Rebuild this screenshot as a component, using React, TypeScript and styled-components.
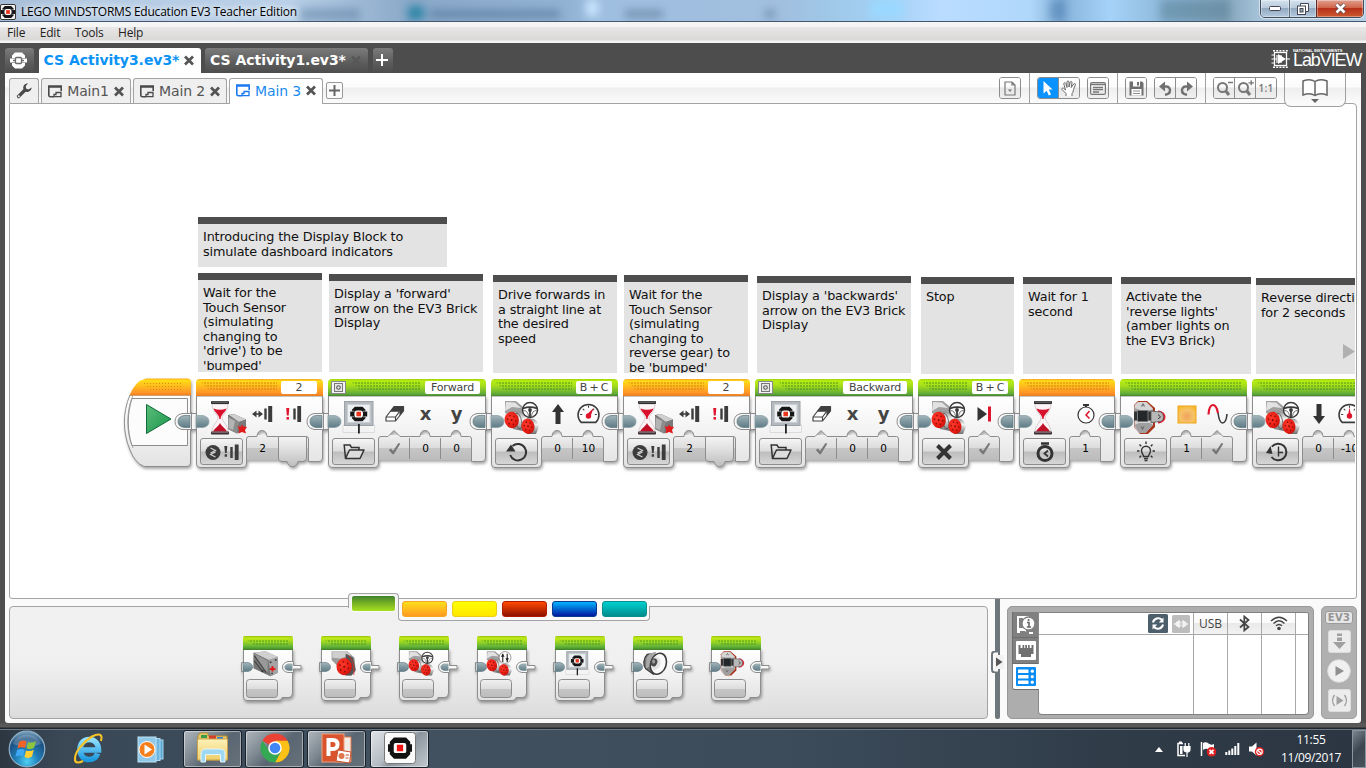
import React from "react";
import styled, { createGlobalStyle, css } from "styled-components";

const ui = `"Open Sans", "Noto Sans", sans-serif`;
const verdana = `"DejaVu Sans", sans-serif`;

const Global = createGlobalStyle`
  * { box-sizing: border-box; }
  body { margin: 0; background: #4d4d4d; overflow: hidden; }
  svg { display: block; flex: none; }
`;

/* ---------- window frame ---------- */

const Screen = styled.div`
  width: 1366px;
  height: 768px;
  display: flex;
  flex-direction: column;
  overflow: hidden;
  font-family: ${verdana};
  color: #111;
`;

const TitleBar = styled.div`
  position: relative;
  height: 22px;
  flex: none;
  display: flex;
  align-items: center;
  overflow: hidden;
  border-bottom: 1px solid #46566c;
  background: linear-gradient(90deg, #a5bcd6 0, #b4cbe4 90px, #b9d0e8 290px, #8aa8c8 410px, #92b3d4 570px, #9fbfe0 600px, #a1bfdf 780px, #9fc6e6 820px, #a3d0f3 880px, #b9dcff 940px, #b0d8fa 1030px, #86b2da 1060px, #a5d2f8 1110px, #8bb6d8 1170px, #84a6bd 1225px, #a8c4da 1262px, #b5cfe6 100%);
`;
const Haze = styled.svg`
  position: absolute;
  inset: 0;
  filter: blur(4px);
`;
const TitleText = styled.div`
  position: relative;
  margin-left: 5px;
  font: 12px/20px ${ui};
  letter-spacing: -0.22px;
  color: #000;
  white-space: nowrap;
  padding-top: 2px;
  text-shadow: 0 0 6px #fff, 0 0 8px #fff;
`;
const AppIcon = styled.svg`
  position: relative;
  margin-top: 2px;
`;
const WindowButtons = styled.div`
  position: relative;
  display: flex;
  align-self: flex-start;
  margin: -1px 2px 0 auto;
  height: 19px;
  border: 1px solid #3f4d5c;
  border-radius: 0 0 5px 5px;
  overflow: hidden;
  box-shadow: 0 0 0 1px rgba(255, 255, 255, 0.5);
`;
const WindowButton = styled.div<{ $w: number; $close?: boolean }>`
  width: ${(p) => p.$w}px;
  display: flex;
  align-items: center;
  justify-content: center;
  border-left: ${(p) => (p.$close ? "1px solid #5a2a22" : "1px solid #5c6c7c")};
  background: ${(p) =>
    p.$close
      ? "linear-gradient(#e0a090 0, #d0654a 45%, #b8301a 50%, #cc5a30 100%)"
      : "linear-gradient(#d5e2ee 0, #b9cbdc 45%, #93a9c0 50%, #b4c9de 100%)"};
  box-shadow: inset 0 0 0 1px rgba(255, 255, 255, 0.35);
  &:first-child { border-left: 0; }
`;

const MenuBar = styled.div`
  height: 21px;
  flex: none;
  display: flex;
  gap: 14.5px;
  padding-left: 7px;
  font: 12px/21px ${ui};
  letter-spacing: -0.2px;
  color: #222;
  background: linear-gradient(#f5f5f5 0, #f5f5f5 5px, #e8e6e6 5px, #dbd9d7 18px, #f4f3f2 19px, #f4f4f4 21px);
`;

const FileTabs = styled.div`
  height: 30px;
  flex: none;
  display: flex;
  align-items: flex-end;
  padding: 0 6px 0 5px;
  background: #4d4d4d;
`;
const FileTab = styled.div<{ $w: number; $gap: number; $active?: boolean }>`
  width: ${(p) => p.$w}px;
  height: 25px;
  margin-right: ${(p) => p.$gap}px;
  display: flex;
  align-items: center;
  justify-content: center;
  gap: 5px;
  padding: 0 2px 1px 0;
  border-radius: 3px 3px 0 0;
  font: bold 14px/24px ${verdana};
  letter-spacing: -0.05px;
  white-space: nowrap;
  color: ${(p) => (p.$active ? "#0a93f5" : "#fff")};
  background: ${(p) => (p.$active ? "#fff" : "linear-gradient(#7b7b7b, #5c5c5c 60%, #4d4d4d)")};
`;
const LabView = styled.div`
  display: flex;
  align-items: center;
  gap: 3px;
  margin: 0 0 5px auto;
  color: #fff;
`;
const LabViewName = styled.div`
  width: 67px;
  font: 18px/15px "Liberation Sans", sans-serif;
  letter-spacing: -1.1px;
  small {
    display: block;
    font: bold 4px/4px "Liberation Sans", sans-serif;
    letter-spacing: -0.05px;
  }
`;

const Client = styled.div`
  height: 650px;
  flex: none;
  margin: 0 5px;
  display: flex;
  flex-direction: column;
  background: #fafafa;
  border-radius: 0 0 3px 3px;
`;
const Ribbon = styled.div`
  height: 30px;
  flex: none;
  display: flex;
  align-items: flex-end;
  padding-left: 4px;
  background: linear-gradient(#fff 0, #fcfcfc 14px, #efefef 15px, #fbfbfb 30px);
`;
const PageTab = styled.div<{ $w: number; $active?: boolean }>`
  position: relative;
  width: ${(p) => p.$w}px;
  height: ${(p) => (p.$active ? 26 : 25)}px;
  margin-bottom: ${(p) => (p.$active ? -1 : 0)}px;
  margin-right: 2px;
  padding-bottom: ${(p) => (p.$active ? 2 : 0)}px;
  z-index: 1;
  display: flex;
  align-items: center;
  justify-content: center;
  gap: 5px;
  border: 1px solid #a3a3a3;
  border-bottom: 0;
  border-radius: 3px 3px 0 0;
  background: ${(p) => (p.$active ? "#fff" : "#efefef")};
  color: ${(p) => (p.$active ? "#1a8cf0" : "#555")};
  font: 14px/24px ${verdana};
  letter-spacing: -0.15px;
  white-space: nowrap;
`;
const AddPage = styled.div`
  width: 17px;
  height: 17px;
  margin: 0 0 4px 1px;
  border: 1px solid #999;
  border-radius: 2px;
  background: #fafafa;
  display: flex;
  align-items: center;
  justify-content: center;
`;
const Tools = styled.div`
  display: flex;
  align-items: center;
  height: 30px;
  margin-left: auto;
  padding-right: 15px;
`;
const ToolGroup = styled.div<{ $ml: number }>`
  display: flex;
  height: 22px;
  margin-left: ${(p) => p.$ml}px;
  border: 1px solid #8c8c8c;
  border-radius: 3px;
  overflow: hidden;
`;
const Tool = styled.div<{ $on?: boolean }>`
  width: 20px;
  display: flex;
  align-items: center;
  justify-content: center;
  font: 10px/20px "Open Sans", sans-serif;
  letter-spacing: 0.2px;
  font-weight: 600;
  color: #777;
  background: ${(p) => (p.$on ? "#0a93ff" : "linear-gradient(#fff 0, #fafafa 45%, #e6e6e6 50%, #f0f0f0 100%)")};
  & + & { border-left: 1px solid #8c8c8c; width: 21px; }
`;
const Divider = styled.div`
  width: 1px;
  height: 30px;
  margin-left: 8px;
  background: #a0a0a0;
`;
const BookTab = styled.div`
  position: relative;
  z-index: 1;
  align-self: flex-start;
  width: 62px;
  height: 34px;
  margin: 0 0 -4px 7px;
  display: flex;
  justify-content: center;
  padding-top: 6px;
  border: 1px solid #a0a0a0;
  border-top: 0;
  border-radius: 0 0 7px 7px;
  background: linear-gradient(#fff 0, #fbfbfb 14px, #eeeeee 15px, #fafafa 30px);
`;

/* ---------- programming canvas ---------- */

const Canvas = styled.div`
  position: relative;
  height: 496px;
  flex: none;
  margin: 0 4px;
  border: 1px solid #a3a3a3;
  border-radius: 0 4px 3px 3px;
  background: #fff;
  overflow: hidden;
`;
/* Canvas nodes share one coordinate system measured from the canvas origin. */
const Plane = styled.div`
  position: absolute;
  left: 0;
  top: 0;
  width: 1345px;
  height: 494px;
  overflow: hidden;
`;
const Note = styled.div<{ $x: number; $y: number; $w: number; $h: number }>`
  position: absolute;
  left: ${(p) => p.$x - 10}px;
  top: ${(p) => p.$y - 104}px;
  width: ${(p) => p.$w}px;
  height: ${(p) => p.$h}px;
  padding: 6px 0 0 5px;
  border-top: 7px solid #4d4d4d;
  background: #e3e3e3;
  overflow: hidden;
  color: #111;
  font: 12.8px/14.5px ${verdana};
  letter-spacing: -0.14px;
  white-space: pre;
`;
const Node = styled.div<{ $x: number; $w: number }>`
  position: absolute;
  left: ${(p) => p.$x - 10}px;
  top: 274px;
  width: ${(p) => p.$w}px;
  height: 92px;
  padding-top: 1px;
`;
const Backdrop = styled.svg`
  position: absolute;
  left: 0;
  top: 0;
  overflow: visible;
  filter: drop-shadow(1.5px 2px 1.5px rgba(0, 0, 0, 0.35));
`;
const dots = css<{ $dot: string }>`
  background-image: radial-gradient(circle at 1px 1px, ${(p) => p.$dot} 0.4px, transparent 0.9px);
  background-size: 3px 3px;
  clip-path: polygon(0 0, 100% 0, 100% 100%, 9px 100%);
`;
const NodeHead = styled.div<{ $tone: "green" | "orange" }>`
  position: relative;
  height: 17px;
  display: flex;
  align-items: center;
  gap: 4px;
  padding: 0 6px 0 3px;
  border-radius: 4px 4px 0 0;
  background: ${(p) =>
    p.$tone === "green"
      ? "linear-gradient(#9fd10c 0, #b8ee12 2px, #a4dc1c 7px, #5fa93a 15px, #45832c 17px)"
      : "linear-gradient(#f5a528 0, #ffdd15 2px, #ffc21c 6px, #ff9328 14px, #e87d1f 17px)"};
`;
const Grip = styled.div<{ $dot: string }>`
  flex: 1;
  height: 9px;
  margin: 0 0 2px 2px;
  ${dots}
`;
const Tag = styled.div<{ $w: number }>`
  width: ${(p) => p.$w}px;
  height: 13px;
  border-radius: 2px;
  background: #fff;
  text-align: center;
  font: 11px/13px ${verdana};
  letter-spacing: -0.2px;
  word-spacing: -1px;
  color: #444;
  white-space: nowrap;
`;
const Row = styled.div<{ $h: number }>`
  position: relative;
  display: flex;
  height: ${(p) => p.$h}px;
`;
const ParamIcon = styled.div`
  width: 31px;
  display: flex;
  justify-content: center;
  align-items: center;
  padding-bottom: 4px;
  font: bold 18px/20px ${verdana};
  color: #444;
`;
const ModeSlot = styled.div`
  width: 51px;
  padding: 2px 0 0 4px;
`;
const ModeButton = styled.div`
  width: 43px;
  height: 27px;
  display: flex;
  align-items: center;
  justify-content: center;
  border: 1px solid #8d8d8d;
  border-radius: 3px;
  background: linear-gradient(#f6f6f6 0, #dcdcdc 48%, #bdbdbd 52%, #d6d6d6 100%);
`;
const ParamValue = styled.div`
  width: 31px;
  display: flex;
  justify-content: center;
  padding-top: 6px;
  font: 10.5px/13px ${verdana};
  color: #000;
  white-space: nowrap;
`;
const ScrollHint = styled.svg`
  position: absolute;
  left: 1333px;
  top: 240px;
`;

function Gradients() {
  return (
    <svg width="0" height="0" style={{ position: "absolute" }}>
      <defs>
        <linearGradient id="body" x1="0" y1="0" x2="0" y2="1">
          <stop offset="0" stopColor="#ffffff" />
          <stop offset=".55" stopColor="#f1f1f1" />
          <stop offset="1" stopColor="#e2e2e2" />
        </linearGradient>
        <linearGradient id="cell" x1="0" y1="0" x2="0" y2="1">
          <stop offset="0" stopColor="#f0f0f0" />
          <stop offset=".5" stopColor="#dddddd" />
          <stop offset=".52" stopColor="#c6c6c6" />
          <stop offset="1" stopColor="#bcbcbc" />
        </linearGradient>
        <linearGradient id="plug" x1="0" y1="0" x2="0" y2="1">
          <stop offset="0" stopColor="#f4f4f4" />
          <stop offset=".45" stopColor="#dedede" />
          <stop offset="1" stopColor="#bdbdbd" />
        </linearGradient>
        <linearGradient id="port" x1="0" y1="0" x2="0" y2="1">
          <stop offset="0" stopColor="#a3b5bb" />
          <stop offset=".5" stopColor="#7f979f" />
          <stop offset="1" stopColor="#5f7c86" />
        </linearGradient>
        <linearGradient id="orange" x1="0" y1="0" x2="0" y2="1">
          <stop offset="0" stopColor="#fbb01c" />
          <stop offset=".12" stopColor="#ffdd15" />
          <stop offset=".85" stopColor="#ff9328" />
          <stop offset="1" stopColor="#e87d1f" />
        </linearGradient>
        <linearGradient id="metal" x1="0" y1="0" x2="1" y2="1">
          <stop offset="0" stopColor="#e8e8e8" />
          <stop offset=".5" stopColor="#b8b8b8" />
          <stop offset="1" stopColor="#6f6f6f" />
        </linearGradient>
        <linearGradient id="drum" x1="0" y1="0" x2="0" y2="1">
          <stop offset="0" stopColor="#8a8a8a" />
          <stop offset=".4" stopColor="#f4f4f4" />
          <stop offset="1" stopColor="#6c6c6c" />
        </linearGradient>
        <radialGradient id="hub" cx=".4" cy=".35" r=".75">
          <stop offset="0" stopColor="#ff3a2c" />
          <stop offset=".7" stopColor="#e51a12" />
          <stop offset="1" stopColor="#b01008" />
        </radialGradient>
        <linearGradient id="play" x1="0" y1="0" x2="1" y2="1">
          <stop offset="0" stopColor="#5cbf7a" />
          <stop offset="1" stopColor="#17924a" />
        </linearGradient>
        <radialGradient id="amber" cx=".5" cy=".6" r=".7">
          <stop offset="0" stopColor="#f0a25c" />
          <stop offset=".55" stopColor="#f6c268" />
          <stop offset="1" stopColor="#f8b820" />
        </radialGradient>
        <radialGradient id="orb" cx=".5" cy=".85" r=".8">
          <stop offset="0" stopColor="#4fd0f5" />
          <stop offset=".4" stopColor="#1f7fb8" />
          <stop offset=".8" stopColor="#1d4f80" />
          <stop offset="1" stopColor="#6d97b5" />
        </radialGradient>
        <linearGradient id="folder" x1="0" y1="0" x2="0" y2="1">
          <stop offset="0" stopColor="#fdf1b8" />
          <stop offset="1" stopColor="#f0cf6a" />
        </linearGradient>
        <linearGradient id="ie" x1="0" y1="0" x2="0" y2="1">
          <stop offset="0" stopColor="#8fe0ff" />
          <stop offset="1" stopColor="#1f9ae0" />
        </linearGradient>
      </defs>
    </svg>
  );
}

/* ---------- block artwork (50 x 40 icon field) ---------- */

const Hourglass = ({ x = 15 }: { x?: number }) => (
  <g transform={`translate(${x} 5)`}>
    <path d="M1 3C1 11 7 13 7 17S1 24 1 31H17C17 24 11 20 11 17S17 11 17 3Z" fill="#fbf3f5" stroke="#cbbcc0" strokeWidth=".7" />
    <path d="M2.500 7.500Q9 10 15.500 7.500C14 12 9.600 13.500 9.600 18H8.400C8.400 13.500 4 12 2.500 7.500Z" fill="#d8102c" />
    <path d="M9 22C10 25 14 27 16 30.500H2C4 27 8 25 9 22Z" fill="#c20f28" />
    <rect x="0" y="0" width="18" height="3" rx=".8" fill="#2e2e2e" />
    <rect x="1" y="0.700" width="16" height=".8" fill="#8a8a8a" />
    <rect x="0" y="30.500" width="18" height="3" rx=".8" fill="#3a3034" />
    <rect x="1" y="31" width="16" height=".8" fill="#8a7076" />
  </g>
);
const TouchSensor = () => (
  <g>
    <path d="M32 19L38 18L50 23.500L50 31L41 37.500L32 33Z" fill="#6f6f6f" />
    <path d="M33 19L38 18L50 23.500L43 26Z" fill="#cfcfcf" />
    <path d="M32 20L43 26L41 37.500L32 33Z" fill="#8c8c8c" />
    <path d="M33 22L39 25L37 34L32.500 32Z" fill="#b4b4b4" />
    <path d="M43 26L50 23.500L50 31L42 37Z" fill="#7a7a7a" />
    <path d="M41.500 30L44.500 31L46 28.500L47.500 30.500L51 31L49 34L50 37.500L46 36L42.500 37.500L43.200 34Z" fill="#e21c1c" />
  </g>
);
const Logo = ({ s = 1 }: { s?: number }) => (
  <g transform={`scale(${s})`}>
    <path d="M-4.500 -8.500H4.500L8 -5V-3H10V3H8V5L4.500 8.500H-4.500L-8 5V3H-10V-3H-8V-5Z" fill="#161616" />
    <path d="M-8.500 -3.300H-5M-8.500 3.300H-5M5 -3.300H8.500M5 3.300H8.500" stroke="#fff" strokeWidth=".6" />
    <rect x="-5" y="-4.200" width="10" height="8.400" rx="3" fill="#fff" />
    <rect x="-2.700" y="-2.700" width="5.400" height="5.400" fill="#e8341c" />
  </g>
);
const DisplayArt = () => (
  <g>
    <path d="M15 36.500V29H18M46.500 36.500V29H44M15 36.500H46.500" fill="#fbfbfb" stroke="#dadada" strokeWidth="1" />
    <rect x="16.500" y="5.500" width="28.500" height="24" fill="#b4babf" stroke="#9ba1a6" />
    <rect x="19.500" y="8.500" width="22.500" height="18" fill="#edf0f2" stroke="#c9ced2" />
    <g transform="translate(30.700 18)"><Logo s={0.85} /></g>
    <rect x="30" y="28" width="1.800" height="9.500" fill="#222" />
  </g>
);
const Wheel = () => (
  <g fill="none" stroke="#3a3a3a">
    <circle r="7.500" fill="#fff" fillOpacity=".85" strokeWidth="1.500" />
    <path d="M-7 -1.500C-3 -3 3 -3 7 -1.500M0 1V7" strokeWidth="1.800" />
    <path d="M-6.500 .5Q-2 .5 -1.500 6.500M6.500 .5Q2 .5 1.500 6.500" strokeWidth=".7" />
    <circle r="1.900" fill="#3a3a3a" stroke="none" />
  </g>
);
const Hub = ({ r = 8 }: { r?: number }) => (
  <g>
    <circle r={r} fill="url(#hub)" />
    {[0, 60, 120, 180, 240, 300].map((a) => (
      <circle key={a} r={r * 0.11} cx={r * 0.58} transform={`rotate(${a + 20})`} fill="#8a0f0a" />
    ))}
    <circle r={r * 0.13} fill="#7a0a08" />
  </g>
);
const MotorsArt = ({ sliders }: { sliders?: boolean }) => (
  <g>
    <path d="M14 5H25L31 10L33 18L24 22L14 17Z" fill="#a0a0a0" />
    <path d="M15 6L24 6.500L30 12L21 11L14 15Z" fill="#e2e2e2" />
    <path d="M21 15L30 16Q36 20 35 28L32 35L22 33Z" fill="url(#drum)" />
    <path d="M36 22L43 23Q48 26 47.500 32L45 38L36 38Z" fill="url(#drum)" />
    <ellipse cx="27.500" cy="25" rx="3" ry="8" transform="rotate(-12 27.500 25)" fill="none" stroke="#4a4a4a" strokeWidth=".7" />
    <g transform="translate(20.700 24) rotate(-12) scale(.86 1)"><Hub r={8.200} /></g>
    <g transform="translate(37 30.300) rotate(-12) scale(.84 1)"><Hub r={7.700} /></g>
    {sliders ? (
      <g transform="translate(38.500 13.500)">
        <circle r="8" fill="#fff" stroke="#555" strokeWidth=".8" />
        <path d="M-3 6V-5M3 6V-5" stroke="#222" strokeWidth="1.500" />
        <path d="M-5.500 -1L-3 -5L-.5 -1ZM.5 1L3 5L5.500 1Z" fill="#222" />
      </g>
    ) : (
      <g transform="translate(39 14)"><Wheel /></g>
    )}
  </g>
);
const BrickArt = () => (
  <g>
    <path d="M18 5H27L35 12V31L28 38H20L14 31V9Z" fill="#a8361e" />
    <path d="M18 6H26.500L33 12.500V29L25.500 37H19L14.500 31V9Z" fill="#d4d4d4" />
    <path d="M14.500 12L20 14H31L33 13V17H14.500ZM14.500 29L19 27H30L33 29L25.500 37H19Z" fill="#9f9f9f" />
    <path d="M21.500 10.500L23 8L24.500 10.500M21 30.500L22.500 33L24 30.500" fill="none" stroke="#666" strokeWidth="1.100" />
    <rect x="14" y="15.500" width="20" height="9" fill="#333" />
    <rect x="17.500" y="14.500" width="10.500" height="11" rx="1" fill="#24282b" stroke="#7a7a7a" />
    <path d="M38 14.500C43 15 45.500 18 45.500 21S43 27 38 27.500Z" fill="#e01f2d" />
    <path d="M31 15L41 16Q43.500 18 43.500 21T41 25.500L31 26.500Z" fill="#b8b8b8" stroke="#555" strokeWidth=".8" />
    <path d="M38 18.500L40.500 20.800L38 23" fill="none" stroke="#333" />
  </g>
);
const MediumMotorArt = () => (
  <g>
    <path d="M15 5H36L46 14L47.500 32L41 38H34L22 24L15 17Z" fill="#9a9a9a" />
    <path d="M16 5H34L41 10L27 15L16 14Z" fill="#cfcfcf" />
    <path d="M34 8L44 14L47.500 30L42 38L34 38Z" fill="#545454" />
    <path d="M38 11Q47 20 45 37" fill="none" stroke="#d3322a" strokeWidth="1.200" />
    <g transform="translate(32 26) scale(.9 1)"><Hub r={11.500} /></g>
  </g>
);
const BoxMotorArt = () => (
  <g>
    <path d="M15 7L31 5L48 13V34L38 39L15 28Z" fill="#8a8a8a" />
    <path d="M15 7L31 5L48 13L35 17Z" fill="#d0d0d0" />
    <path d="M35 17L48 13V34L38 39Z" fill="#a4a4a4" />
    <path d="M15 7L35 17L38 39L15 28Z" fill="#767676" />
    <path d="M15 8L34 18L34 33L26 28Z" fill="#999" />
    <path d="M16 11L32 34M16 18L26 31" stroke="#4a4a4a" strokeWidth="1.800" />
    <circle cx="38" cy="20" r="1.400" fill="#444" /><circle cx="45" cy="17" r="1.400" fill="#444" /><circle cx="27" cy="32" r="1.500" fill="#333" /><circle cx="40" cy="35" r="1.300" fill="#444" />
    <path d="M40.500 25V32.500M37 29H44.500" stroke="#e01c1c" strokeWidth="2.600" />
  </g>
);
const SpeakerArt = () => (
  <g>
    <path d="M20 9C14 15 14 24 18 29L28 36L30 8Z" fill="#777" stroke="#333" strokeWidth="1.500" />
    <path d="M19 14C22 8 28 6 32 6L24 26L18 28Z" fill="#a9a9a9" />
    <ellipse cx="35" cy="22" rx="10.500" ry="14.500" transform="rotate(18 35 22)" fill="#fafafa" stroke="#3c3c3c" strokeWidth="2.200" />
    <path d="M30 12Q38 12 38 20T29 31Q25 26 26 20T30 12Z" fill="#e2e2e2" />
    <ellipse cx="29" cy="20" rx="4.500" ry="5.500" transform="rotate(18 29 20)" fill="#4a4a4a" />
    <ellipse cx="28.500" cy="19" rx="2.200" ry="2.800" fill="#9a9a9a" />
  </g>
);

/* ---------- parameter icons ---------- */

const Glyph = ({ children, s = 22 }: { children: React.ReactNode; s?: number }) => (
  <svg width={s} height={s} viewBox="0 0 22 22">{children}</svg>
);
const PressIcon = () => (
  <Glyph>
    <path d="M0 11L4.500 7.500V14.500ZM11 11L6.500 7.500V14.500Z" fill="#3c3c3c" />
    <path d="M3 11H9" stroke="#3c3c3c" strokeWidth="1.500" />
    <path d="M13.500 5.500V16.500" stroke="#3c3c3c" strokeWidth="2.400" />
    <path d="M18.200 3V19" stroke="#3c3c3c" strokeWidth="4" />
  </Glyph>
);
const AlertBars = () => (
  <Glyph>
    <path d="M3.200 5H6.300L5.700 12.500H3.800Z" fill="#e0142c" /><rect x="3.500" y="14" width="2.500" height="2.600" fill="#e0142c" />
    <path d="M11.500 5.500V16.500" stroke="#3c3c3c" strokeWidth="2.400" />
    <path d="M16.200 3V19" stroke="#3c3c3c" strokeWidth="3.800" />
  </Glyph>
);
const Eraser = () => (
  <Glyph>
    <path d="M2 14L10 3.500H19.500V8L11.500 18H2Z" fill="#fff" stroke="#444" strokeWidth="1.200" strokeLinejoin="round" />
    <path d="M6 8.700L10 3.500H19.500V8L15.500 13V8.700Z" fill="#3f3f3f" />
    <path d="M2 14H11.500L15.500 8.700M11.500 14V18" fill="none" stroke="#444" strokeWidth="1.200" />
  </Glyph>
);
const ArrowUp = ({ down }: { down?: boolean }) => (
  <Glyph>
    <path transform={down ? "rotate(180 11 11)" : undefined} d="M11 1L17 9H13.500V21H8.500V9H5Z" fill="#333" />
  </Glyph>
);
const Gauge = ({ low }: { low?: boolean }) => (
  <Glyph s={23}>
    <path d="M4 18.500A10 10 0 1 1 18 18.500Z" fill="#fff" stroke="#3c3c3c" strokeWidth="1.500" />
    <path d="M3 11H5M17 11H19M11 2.500V4.500M5.500 5.500L7 7M16.500 5.500L15 7" stroke="#3c3c3c" strokeWidth="1" />
    <path d={low ? "M9.600 12L11 4L12.400 12Z" : "M10 10.500L16 4.500L13 12.500Z"} fill="#e0142c" />
    <circle cx="11" cy="12.500" r="2.600" fill="#e0142c" />
  </Glyph>
);
const StopEnd = () => (
  <Glyph>
    <path d="M3.500 4L13 11L3.500 18Z" fill="#333" />
    <rect x="14" y="3.500" width="3" height="15" fill="#e0142c" />
  </Glyph>
);
const Clock = () => (
  <Glyph s={22}>
    <path d="M8 2H14M11 2V4" stroke="#333" strokeWidth="2" />
    <circle cx="11" cy="12" r="8" fill="#fff" stroke="#333" strokeWidth="1.200" />
    <path d="M14.500 8L11 12L14.500 15.500" fill="none" stroke="#e0142c" strokeWidth="1.500" />
  </Glyph>
);
const ColorSwatch = () => (
  <Glyph><rect x="2" y="3" width="18" height="17" fill="url(#amber)" stroke="#eca51c" /></Glyph>
);
const Pulse = () => (
  <Glyph>
    <path d="M1.500 11.500C2 4 4 2 6 2C8.500 2 10 5 11 10" fill="none" stroke="#e0142c" strokeWidth="2.200" />
    <path d="M11 10C12 17 13.500 20 15.500 20C18 20 19.500 17 20 11" fill="none" stroke="#3c3c3c" strokeWidth="1.600" />
  </Glyph>
);
const Check = () => (
  <svg width="13" height="13" viewBox="0 0 13 13"><path d="M.8 8L3 6.500L5 9L10.500 1L12.300 1.800L5.800 12.200H4.500Z" fill="#777" /></svg>
);

/* ---------- mode icons ---------- */

const ModeCompare = () => (
  <svg width="36" height="20" viewBox="0 0 36 20">
    <circle cx="9" cy="10.500" r="7.500" fill="#3c3c3c" />
    <path d="M6.500 6L11.500 8.500L6.500 11M11.500 10L6.500 12.500L11.500 15" fill="none" stroke="#d8d8d8" strokeWidth="1.100" />
    <path d="M20.300 4H23.300L22.700 11H21ZM20.700 12.300H23V14.800H20.700Z" fill="#3c3c3c" />
    <path d="M27.500 5V16" stroke="#3c3c3c" strokeWidth="2.400" /><path d="M32.700 2.500V18" stroke="#3c3c3c" strokeWidth="3.800" />
  </svg>
);
const ModeFolder = () => (
  <svg width="22" height="17" viewBox="0 0 22 17">
    <path d="M2.500 15.500L1.200 2H7L8.500 4.500H16V7" fill="none" stroke="#333" strokeWidth="1.500" />
    <path d="M2.500 15.500L6.500 7H21L17 15.500Z" fill="#ddd" stroke="#333" strokeWidth="1.500" strokeLinejoin="round" />
  </svg>
);
const ModeLoop = () => (
  <svg width="22" height="22" viewBox="0 0 22 22">
    <path d="M6.500 5A8.200 8.200 0 1 1 4.200 14" fill="none" stroke="#333" strokeWidth="2" />
    <path d="M0 10.500L5 3.500L9.500 10.500Z" fill="#333" />
  </svg>
);
const ModeCross = () => (
  <svg width="16" height="16" viewBox="0 0 16 16"><path d="M1.500 1.500L14.500 14.500M14.500 1.500L1.500 14.500" stroke="#333" strokeWidth="4" /></svg>
);
const ModeTimer = () => (
  <svg width="20" height="22" viewBox="0 0 20 22">
    <path d="M6 2.500H14" stroke="#333" strokeWidth="2.500" />
    <circle cx="10" cy="12.500" r="7" fill="none" stroke="#333" strokeWidth="3" />
    <path d="M13 9.500L9.500 12.500L13 15.500" fill="none" stroke="#333" strokeWidth="1.800" />
  </svg>
);
const ModeBulb = () => (
  <svg width="20" height="22" viewBox="0 0 20 22" fill="none" stroke="#333" strokeWidth="1.400">
    <path d="M7.500 15.500C7.500 13 5.500 12.500 5.500 9.700A4.500 4.500 0 0 1 14.500 9.700C14.500 12.500 12.500 13 12.500 15.500Z" />
    <path d="M8 17.500H12M8.500 19.500H11.500M10 .5V3M1 10H3.500M16.500 10H19M3.500 3.500L5.200 5.200M16.500 3.500L14.800 5.200M3.500 16.500L5.200 14.800M16.500 16.500L14.800 14.800" />
  </svg>
);
const ModeClock = () => (
  <svg width="23" height="20" viewBox="0 0 23 20">
    <path d="M5.800 4.600A8.300 8.300 0 1 1 5.500 15" fill="none" stroke="#333" strokeWidth="2" />
    <path d="M0 11L4.500 4L6.500 12Z" fill="#333" />
    <path d="M12.500 4.500V14.500M12.500 10.500H17" stroke="#333" strokeWidth="1.400" />
  </svg>
);

/* ---------- block component ---------- */

type Notch = "round" | "peak" | "none";
type Param = { icon: React.ReactNode; value: React.ReactNode; notch: Notch };
type BlockSpec = {
  x: number;
  tone: "green" | "orange";
  art: React.ReactNode;
  mode: React.ReactNode;
  params: Param[];
  tag?: string;
  tagW?: number;
  screen?: boolean;
};

function outline(params: Param[]) {
  const w = 65 + 31 * params.length;
  const leg = w - 14.5;
  let d = `M.5 18V86Q.5 89.500 4 89.500H46Q50.500 89.500 50.500 85V61Q50.500 58.500 53 58.500`;
  params.forEach((p, i) => {
    const c = 66 + i * 31;
    if (p.notch === "round") d += `H${c - 5}Q${c - 4.5} 52.500 ${c} 52.500Q${c + 4.5} 52.500 ${c + 5} 58.500`;
    if (p.notch === "peak") d += `H${c - 6}L${c} 52.500L${c + 6} 58.500`;
  });
  d += `H${leg - 2}Q${leg} 58.500 ${leg} 61V83.500H${w - 4}Q${w - 0.5} 83.500 ${w - 0.5} 80V18Z`;
  return d;
}

function Block({ x, tone, art, mode, params, tag, tagW = 36, screen }: BlockSpec) {
  const w = 65 + 31 * params.length;
  return (
    <Node $x={x} $w={w}>
      <Backdrop width={w} height={92}>
        <rect x="50" y="57" width={31 * params.length + 2} height="25" fill="url(#cell)" />
        {params.map((p, i) =>
          i > 0 && p.notch !== "none" ? <path key={i} d={`M${50.5 + i * 31} 60V81`} stroke="#8d8d8d" /> : null
        )}
        <path d={outline(params)} fill="url(#body)" stroke="#8d8d8d" />
        {params.map((p, i) =>
          p.notch === "none" ? (
            <path
              key={i}
              d={`M${51.500 + i * 31} 58.500V81Q${52 + i * 31} 83.500 ${55 + i * 31} 83.500H${60 + i * 31}C${62 + i * 31} 90.500 ${69 + i * 31} 90.500 ${71 + i * 31} 83.500H${76 + i * 31}Q${79.500 + i * 31} 83.500 ${79.500 + i * 31} 80V58.500Z`}
              fill="url(#plug)"
              stroke="#8d8d8d"
            />
          ) : null
        )}
        <path d={`M${w + 5} 35.500H${w - 9}Q${w - 16} 37 ${w - 16} 43.500Q${w - 16} 50 ${w - 9} 51.500H${w + 5}`} fill="#f6f6f6" stroke="#8d8d8d" />
        <path d={`M${w - 1} 37.500H${w - 7}Q${w - 13} 38.500 ${w - 13} 43.500Q${w - 13} 48.500 ${w - 7} 49.500H${w - 1}Z`} fill="url(#port)" stroke="#5f767e" strokeWidth=".7" />
        <path d={`M${w + 0.5} 34V53`} stroke="#8d8d8d" />
        <path d="M0 37.500H7Q13 39 13 43.500Q13 48.500 7 49.500H0Z" fill="url(#port)" stroke="#8a9ea5" strokeWidth=".7" />
      </Backdrop>
      <NodeHead $tone={tone}>
        {screen && (
          <svg width="15" height="13" viewBox="0 0 15 13">
            <rect x=".5" y=".5" width="14" height="12" fill="#f4f4f4" stroke="#888" />
            <rect x="3.500" y="2.500" width="8" height="8" fill="#e8e8e8" stroke="#777" />
            <circle cx="7.500" cy="6.500" r="1.800" fill="none" stroke="#555" strokeWidth="1.100" />
          </svg>
        )}
        <Grip $dot={tone === "green" ? "#2f7d1c" : "#c9690f"} />
        {tag && <Tag $w={tagW}>{tag}</Tag>}
      </NodeHead>
      <Row $h={40}>
        <svg width="51" height="40">{art}</svg>
        {params.map((p, i) => (
          <ParamIcon key={i}>{p.icon}</ParamIcon>
        ))}
      </Row>
      <Row $h={33}>
        <ModeSlot><ModeButton>{mode}</ModeButton></ModeSlot>
        {params.map((p, i) => (
          <ParamValue key={i}>{p.value}</ParamValue>
        ))}
      </Row>
    </Node>
  );
}

function StartBlock() {
  return (
    <Node $x={124} $w={67}>
      <Backdrop width={67} height={92}>
        <path d="M6 17C-1.500 34 -1.500 54 6 72Q11 85 20 88.500H63Q66.500 88.500 66.500 85V17Z" fill="url(#body)" stroke="#8d8d8d" />
        <path d="M9 17C2 34 2 54 9 70" fill="none" stroke="#a8a8a8" />
        <path d="M5.500 17.500Q11 3 22 .5H63Q67 .5 67 4V17.500Z" fill="url(#orange)" />
        <path d="M8 20.500H63.500V67.500H8C3 53 3 35 8 20.500Z" fill="#fcfcfc" stroke="#8d8d8d" />
        {[0, 1, 2].map((r) =>
          Array.from({ length: 13 - r }, (_, i) => (
            <rect key={`${r}${i}`} x={20 + r * 3 + i * 3} y={5 + r * 3} width="1" height="1" fill="#d98a10" />
          ))
        )}
        <path d="M22.500 26.500L47 41L22.500 55.500Z" fill="url(#play)" stroke="#126b3a" />
        <path d="M72 35.500H58Q51 37 51 43.500Q51 50 58 51.500H72" fill="#f6f6f6" stroke="#8d8d8d" />
        <path d="M66 37.500H60Q54 38.500 54 43.500Q54 48.500 60 49.500H66Z" fill="url(#port)" stroke="#5f767e" strokeWidth=".7" />
        <path d="M67.500 34V53" stroke="#8d8d8d" />
      </Backdrop>
    </Node>
  );
}

const touchParams: Param[] = [
  { icon: <PressIcon />, value: "2", notch: "round" },
  { icon: <AlertBars />, value: "", notch: "none" },
];
const displayParams: Param[] = [
  { icon: <Eraser />, value: <Check />, notch: "peak" },
  { icon: "x", value: "0", notch: "round" },
  { icon: "y", value: "0", notch: "round" },
];
const touchArt = <><Hourglass /><TouchSensor /></>;

const program: BlockSpec[] = [
  { x: 196, tone: "orange", tag: "2", art: touchArt, mode: <ModeCompare />, params: touchParams },
  { x: 328, tone: "green", tag: "Forward", tagW: 55, screen: true, art: <DisplayArt />, mode: <ModeFolder />, params: displayParams },
  { x: 491, tone: "green", tag: "B + C", art: <MotorsArt />, mode: <ModeLoop />, params: [
    { icon: <ArrowUp />, value: "0", notch: "round" }, { icon: <Gauge />, value: "10", notch: "round" }] },
  { x: 623, tone: "orange", tag: "2", art: touchArt, mode: <ModeCompare />, params: touchParams },
  { x: 755, tone: "green", tag: "Backward", tagW: 64, screen: true, art: <DisplayArt />, mode: <ModeFolder />, params: displayParams },
  { x: 918, tone: "green", tag: "B + C", art: <MotorsArt />, mode: <ModeCross />, params: [
    { icon: <StopEnd />, value: <Check />, notch: "peak" }] },
  { x: 1019, tone: "orange", art: <Hourglass />, mode: <ModeTimer />, params: [
    { icon: <Clock />, value: "1", notch: "round" }] },
  { x: 1120, tone: "green", art: <BrickArt />, mode: <ModeBulb />, params: [
    { icon: <ColorSwatch />, value: "1", notch: "round" }, { icon: <Pulse />, value: <Check />, notch: "peak" }] },
  { x: 1252, tone: "green", art: <MotorsArt />, mode: <ModeClock />, params: [
    { icon: <ArrowUp down />, value: "0", notch: "round" }, { icon: <Gauge low />, value: "-10", notch: "round" }, { icon: "", value: "", notch: "round" }] },
];

const notes: [number, number, number, number, string][] = [
  [198, 217, 249, 50, "Introducing the Display Block to\nsimulate dashboard indicators"],
  [198, 273, 124, 99, "Wait for the\nTouch Sensor\n(simulating\nchanging to\n'drive') to be\n'bumped'"],
  [329, 274, 154, 98, "Display a 'forward'\narrow on the EV3 Brick\nDisplay"],
  [493, 275, 124, 98, "Drive forwards in\na straight line at\nthe desired\nspeed"],
  [624, 275, 124, 98, "Wait for the\nTouch Sensor\n(simulating\nchanging to\nreverse gear) to\nbe 'bumped'"],
  [757, 276, 154, 97, "Display a 'backwards'\narrow on the EV3 Brick\nDisplay"],
  [921, 277, 93, 97, "Stop"],
  [1023, 277, 89, 97, "Wait for 1\nsecond"],
  [1121, 277, 130, 97, "Activate the\n'reverse lights'\n(amber lights on\nthe EV3 Brick)"],
  [1256, 278, 130, 96, "Reverse direction\nfor 2 seconds"],
];

/* ---------- lower area ---------- */

const Lower = styled.div`
  height: 124px;
  flex: none;
  display: flex;
  align-items: flex-start;
  padding-left: 4px;
`;
const Palette = styled.div`
  position: relative;
  width: 979px;
  height: 113px;
  margin-top: 7px;
  border: 1px solid #a3a3a3;
  border-radius: 4px;
  background: linear-gradient(#f1f1f1 0, #f0f0f0 50%, #dcdcdc 100%);
`;
const Categories = styled.div`
  position: absolute;
  left: 338px;
  top: -14px;
  display: flex;
  align-items: flex-start;
`;
const ActiveCategory = styled.div`
  width: 51px;
  height: 15px;
  padding: 1px 2px;
  border: 1px solid #a3a3a3;
  border-bottom: 0;
  border-radius: 4px 4px 0 0;
  background: #f2f2f2;
`;
const CategoryStrip = styled.div`
  display: flex;
  gap: 5px;
  width: 252px;
  height: 15px;
  margin: 13px 0 0 -1px;
  padding: 0 3px;
  border: 1px solid #a3a3a3;
  border-top: 0;
  border-radius: 0 0 4px 4px;
  background: #fafafa;
`;
const Chip = styled.div<{ $fill: string; $edge: string; $lift?: number }>`
  position: relative;
  width: 45px;
  height: ${(p) => (p.$lift ? 16 : 17)}px;
  flex: none;
  margin-top: ${(p) => p.$lift ?? 0}px;
  border: 1px solid ${(p) => p.$edge};
  border-radius: 3px;
  background: linear-gradient(${(p) => p.$fill});
`;
const Shelf = styled.div`
  display: flex;
  gap: 28px;
  padding: 29px 0 0 233px;
`;
const ShelfBlock = styled.div`
  position: relative;
  width: 50px;
  height: 66px;
`;
const ShelfHead = styled.div`
  position: relative;
  height: 14px;
  padding: 4px 4px 0;
  border-radius: 2px 2px 0 0;
  background: linear-gradient(#8fc010 0, #c2ea14 2px, #a5dc20 5px, #5fb03a 11px, #3d7f28 14px);
`;
const ShelfDots = styled.div<{ $dot: string }>`
  height: 6px;
  ${dots}
`;
const Splitter = styled.div`
  position: relative;
  width: 5px;
  height: 120px;
  margin-left: 7px;
  background: #6c767b;
  border-radius: 0 0 2px 2px;
`;
const SplitterHandle = styled.svg`
  position: absolute;
  left: -4px;
  top: 52px;
`;
const Hardware = styled.div`
  width: 307px;
  height: 113px;
  margin: 7px 0 0 7px;
  padding: 5px 4px 3px;
  display: flex;
  border: 1px solid #989898;
  border-radius: 5px;
  background: #adadad;
`;
const SideTabs = styled.div`
  width: 26px;
  border-radius: 3px 0 0 3px;
`;
const SideTab = styled.div<{ $on?: boolean }>`
  height: 26px;
  width: ${(p) => (p.$on ? 27 : 26)}px;
  position: relative;
  display: flex;
  align-items: center;
  justify-content: center;
  border-bottom: 1px solid #6d6d6d;
  border-left: 1px solid ${(p) => (p.$on ? "#808080" : "#6d6d6d")};
  border-radius: ${(p) => (p.$on ? "0 0 0 3px" : "0")};
  background: ${(p) => (p.$on ? "#fff" : "#808080")};
`;
const Devices = styled.div`
  flex: 1;
  display: flex;
  border: 1px solid #808080;
  border-left-color: #8a8a8a;
  border-radius: 0 3px 4px 4px;
  background: #fff;
  overflow: hidden;
`;
const DeviceCol = styled.div<{ $w?: number }>`
  ${(p) => (p.$w ? `width: ${p.$w}px; border-left: 1px solid #a8a8a8;` : "flex: 1;")}
`;
const ColHead = styled.div<{ $shade?: boolean }>`
  height: 22px;
  display: flex;
  align-items: center;
  justify-content: ${(p) => (p.$shade ? "center" : "flex-end")};
  gap: 4px;
  padding-right: ${(p) => (p.$shade ? 0 : 3)}px;
  border-bottom: 1px solid #a8a8a8;
  background: ${(p) => (p.$shade ? "linear-gradient(#fff 0, #fafafa 48%, #e9e9e9 50%, #f2f2f2 100%)" : "#fff")};
  font: 12px/21px ${ui};
  color: #444;
`;
const Runner = styled.div`
  width: 36px;
  height: 113px;
  margin: 7px 0 0 7px;
  padding-top: 4px;
  display: flex;
  flex-direction: column;
  align-items: center;
  gap: 6px;
  border: 1px solid #a0a0a0;
  border-radius: 5px;
  background: #b0b0b0;
`;
const Brand = styled.div`
  width: 28px;
  height: 13px;
  border: 1px solid #9a9a9a;
  border-radius: 3px;
  background: #e6e6e6;
  color: #949494;
  text-align: center;
  font: bold 10px/11px ${verdana};
  letter-spacing: 0.3px;
`;

const Foot = styled.div`
  height: 6px;
  flex: none;
  background: linear-gradient(#555 0, #5a5a5a 4px, #20262c 5px);
`;

/* ---------- taskbar ---------- */

const Taskbar = styled.div`
  height: 39px;
  flex: none;
  display: flex;
  align-items: center;
  border-top: 1px solid #6c7a88;
  background: linear-gradient(90deg, #2c3742 0, #3a4856 60px, #41515f 440px, #3c4b5a 800px, #2f3b47 1130px, #2b3642 1366px);
`;
const TaskSlot = styled.div<{ $w: number }>`
  width: ${(p) => p.$w}px;
  display: flex;
  justify-content: center;
`;
const TaskButton = styled.div<{ $bright?: boolean; $ml: number }>`
  width: 59px;
  height: 38px;
  margin-left: ${(p) => p.$ml}px;
  padding-bottom: 2px;
  display: flex;
  align-items: center;
  justify-content: center;
  border: 1px solid #18202a;
  border-radius: 3px;
  box-shadow: inset 0 0 0 1px rgba(255, 255, 255, 0.45);
  background: ${(p) =>
    p.$bright
      ? "linear-gradient(135deg, #dfe3e7 0, #b3bbc2 45%, #8b959e 55%, #c2c9cf 100%)"
      : "linear-gradient(135deg, #b0b7bd 0, #7d8891 35%, #5a6671 55%, #66717b 100%)"};
`;
const Tray = styled.div`
  margin-left: auto;
  display: flex;
  align-items: center;
  height: 38px;
  color: #fff;
`;
const TrayIcon = styled.div<{ $ml: number }>`
  margin-left: ${(p) => p.$ml}px;
`;
const Time = styled.div`
  width: 66px;
  margin-left: 13px;
  text-align: center;
  font: 12px/18px ${ui};
  letter-spacing: -0.35px;
`;
const ShowDesktop = styled.div`
  width: 14px;
  height: 38px;
  margin-left: 8px;
  border: 1px solid #8b959e;
  background: linear-gradient(135deg, #7a858f, #3b4650 50%, #48535e);
`;

const CloseX = ({ c = "#555" }: { c?: string }) => (
  <svg width="10" height="11" viewBox="0 0 10 11"><path d="M1 1.500L9 9.500M9 1.500L1 9.500" stroke={c} strokeWidth="2.700" /></svg>
);
const PageIcon = ({ c }: { c: string }) => (
  <svg width="14" height="13" viewBox="0 0 14 13">
    <path d="M6 11.700H2.500Q.8 11.700 .8 10.200V1H13.200V6M1 2H13" fill="none" stroke={c} strokeWidth="1.600" />
    <path d="M8 7.500H13V11.700H6V9.500H8Z" fill="none" stroke={c} strokeWidth="1.300" />
  </svg>
);

function ShelfItem({ art }: { art: React.ReactNode }) {
  return (
    <ShelfBlock>
      <Backdrop width={50} height={66}>
        <path d="M.5 13V61Q.5 64.500 4 64.500H35Q39 64.500 39 61.500H46Q49.500 61 49.500 57V13Z" fill="url(#body)" stroke="#8d8d8d" />
        <path d="M.5 26.500H-1.500V35.500H.5" fill="#f4f4f4" stroke="#8d8d8d" />
        <path d="M0 26.500H5Q9.500 27.500 9.500 31Q9.500 34.500 5 35.500H0Z" fill="url(#port)" stroke="#5f767e" strokeWidth=".6" />
        <path d="M50.500 25.500H45Q39.500 27 39.500 31Q39.500 35.500 45 36.500H50.500V33H58V29.500H50.500Z" fill="#f8f8f8" stroke="#8d8d8d" />
        <path d="M49.500 27.500H45.500Q41.500 28.500 41.500 31Q41.500 34 45.500 34.800H49.500Z" fill="url(#port)" />
        <rect x="3.500" y="43.500" width="31" height="18" rx="3" fill="url(#cell)" stroke="#8d8d8d" />
        <g transform="translate(-.5 11.500) scale(.74)">{art}</g>
      </Backdrop>
      <ShelfHead><ShelfDots $dot="#2f8a1c" /></ShelfHead>
    </ShelfBlock>
  );
}

const shelf = [<BoxMotorArt />, <MediumMotorArt />, <MotorsArt />, <MotorsArt sliders />, <DisplayArt />, <SpeakerArt />, <BrickArt />];

export default function App() {
  return (
    <Screen>
      <Global />
      <Gradients />
      <TitleBar>
        <Haze width="1366" height="21">
          <rect x="300" y="8" width="60" height="13" fill="#6888ac" opacity=".6" />
          <rect x="408" y="6" width="16" height="14" fill="#2f86a8" />
          <rect x="430" y="10" width="130" height="8" fill="#54779c" opacity=".7" />
          <rect x="586" y="-4" width="12" height="20" fill="#c9e6ff" />
          <rect x="625" y="10" width="38" height="8" fill="#62809f" opacity=".7" />
          <rect x="765" y="10" width="10" height="8" fill="#5f7f9f" opacity=".7" />
          <rect x="870" y="-4" width="34" height="22" fill="#9bd8ff" />
          <rect x="1050" y="-2" width="16" height="24" fill="#4d7fb0" opacity=".6" />
          <rect x="1160" y="-2" width="70" height="24" fill="#557b90" opacity=".5" />
        </Haze>
        <AppIcon width="16" height="16" viewBox="0 0 16 16">
          <rect x=".5" y=".5" width="15" height="15" rx="1.500" fill="#f4f4f4" stroke="#333" />
          <g transform="translate(8 8)"><Logo s={0.7} /></g>
        </AppIcon>
        <TitleText>LEGO MINDSTORMS Education EV3 Teacher Edition</TitleText>
        <WindowButtons>
          <WindowButton $w={28}>
            <svg width="12" height="5"><rect x=".5" y=".5" width="11" height="4" rx="1" fill="#fff" stroke="#445" /></svg>
          </WindowButton>
          <WindowButton $w={27}>
            <svg width="12" height="12" viewBox="0 0 12 12"><path d="M3.500 3V.5H11.500V8.500H9" fill="#fff" stroke="#445" /><rect x=".5" y="3" width="8" height="8.500" fill="#fff" stroke="#445" /><rect x="3" y="5.500" width="3" height="3.500" fill="#8aa" stroke="#445" /></svg>
          </WindowButton>
          <WindowButton $w={47} $close>
            <svg width="13" height="11" viewBox="0 0 13 11"><path d="M2.500 1.500L10.500 9.500M10.500 1.500L2.500 9.500" stroke="#5a4650" strokeWidth="4.200" /><path d="M2.500 1.500L10.500 9.500M10.500 1.500L2.500 9.500" stroke="#fff" strokeWidth="2.600" /></svg>
          </WindowButton>
        </WindowButtons>
      </TitleBar>

      <MenuBar><span>File</span><span>Edit</span><span>Tools</span><span>Help</span></MenuBar>

      <FileTabs>
        <FileTab $w={29} $gap={5}>
          <svg width="17" height="17" viewBox="0 0 17 17">
            <path d="M5 .5H12L15 3.500V6H2V3.500ZM2 11H15V13.500L12 16.500H5L2 13.500Z" fill="#fff" />
            <path d="M0 6.500H17V10.500H0Z" fill="#fff" />
            <rect x="3" y="7.800" width="11" height="1.400" fill="#6a6a6a" />
            <rect x="5.500" y="5.500" width="6" height="6" rx="1" fill="#fff" stroke="#6a6a6a" strokeWidth="1.300" />
          </svg>
        </FileTab>
        <FileTab $w={162} $gap={4} $active>CS Activity3.ev3*<CloseX /></FileTab>
        <FileTab $w={163} $gap={5}>CS Activity1.ev3*<CloseX c="#585858" /></FileTab>
        <FileTab $w={20} $gap={0}>
          <svg width="12" height="12"><path d="M6 0V12M0 6H12" stroke="#fff" strokeWidth="2" /></svg>
        </FileTab>
        <LabView>
          <svg width="19" height="18" viewBox="0 0 19 18">
            <rect x="3.500" y="2.500" width="12" height="13" fill="none" stroke="#fff" strokeWidth="1.300" />
            <path d="M2 .8H18M2 17.200H18" stroke="#fff" strokeWidth="1.600" strokeDasharray="2 1.200" />
            <path d="M.5 5H3M.5 9H6M.5 13H3M15 9H19M10 5V13M6 5V13" stroke="#fff" strokeWidth="1.200" />
            <path d="M7 4L15 9L7 14Z" fill="#fff" />
          </svg>
          <LabViewName><small>NATIONAL INSTRUMENTS</small>LabVIEW</LabViewName>
        </LabView>
      </FileTabs>

      <Client>
        <Ribbon>
          <PageTab $w={30}>
            <svg width="16" height="16" viewBox="0 0 16 16">
              <path d="M2.500 13.500L9 7" stroke="#4a4a4a" strokeWidth="3.200" strokeLinecap="round" />
              <path d="M15.500 4.500L12.500 6.500L10 5.500L9.800 3L12 .5C9 .3 6.800 2.500 7.300 5.500C7.800 8.500 10.500 9.500 12.500 8.800C14.500 8 15.700 6.500 15.500 4.500Z" fill="#4a4a4a" />
              <circle cx="2.800" cy="13.200" r="1" fill="#efefef" />
            </svg>
          </PageTab>
          <PageTab $w={90}><PageIcon c="#4a4a4a" />Main1<CloseX /></PageTab>
          <PageTab $w={94}><PageIcon c="#4a4a4a" />Main 2<CloseX /></PageTab>
          <PageTab $w={94} $active><PageIcon c="#1a78f0" />Main 3<CloseX /></PageTab>
          <AddPage><svg width="11" height="11"><path d="M5.500 0V11M0 5.500H11" stroke="#666" strokeWidth="2" /></svg></AddPage>
          <Tools>
            <ToolGroup $ml={0}><Tool>
              <svg width="12" height="15" viewBox="0 0 12 15" fill="none" stroke="#777" strokeWidth="1.200"><path d="M1 1H8L11 4V14H1ZM8 1V4H11" /><path d="M4 8.500H8L6 11Z" fill="#777" stroke="none" /></svg>
            </Tool></ToolGroup>
            <Divider />
            <ToolGroup $ml={7}>
              <Tool $on><svg width="10" height="15" viewBox="0 0 10 15"><path d="M.5 0L9.500 8.500H5.800L8 13.500L5.800 14.500L3.700 9.700L.5 12.500Z" fill="#fff" /></svg></Tool>
              <Tool><svg width="16" height="17" viewBox="0 0 16 17"><path d="M5 16V13.500L1 9.500C.3 8.300 1.800 7.500 2.800 8.500L4.500 10L2.800 4C2.500 2.600 4.300 2.200 4.800 3.500L6 7.500V2C6 .6 8 .6 8 2V7L9.200 2.200C9.600 1 11.300 1.400 11 2.800L10.200 7.500L12.700 4C13.500 2.900 15 3.700 14.300 5L12.500 9.500C12 12 12 12.500 11 13.500V16" fill="#fff" stroke="#666" strokeWidth="1" /></svg></Tool>
            </ToolGroup>
            <ToolGroup $ml={7}><Tool>
              <svg width="16" height="13" viewBox="0 0 16 13"><rect x=".6" y=".6" width="14.800" height="11.800" rx="1.500" fill="none" stroke="#777" strokeWidth="1.200" /><path d="M1 2.500H15M3 5.500H13M3 7.700H13M3 10H9" stroke="#777" strokeWidth="1.300" /></svg>
            </Tool></ToolGroup>
            <Divider />
            <ToolGroup $ml={7}><Tool>
              <svg width="15" height="15" viewBox="0 0 15 15"><path d="M.5 .5H13L14.500 2V14.500H.5Z" fill="#707070" /><rect x="4" y="0" width="7" height="5.500" fill="#fff" /><rect x="8" y="1" width="2" height="3.500" fill="#707070" /><rect x="2.500" y="8" width="10" height="6.500" fill="#fff" /><path d="M4 10H11M4 12.500H11" stroke="#909090" /></svg>
            </Tool></ToolGroup>
            <ToolGroup $ml={7}>
              <Tool><svg width="13" height="15" viewBox="0 0 13 15"><path d="M3 5.500H7Q11 5.500 11 9.500Q11 13 6 13.800" fill="none" stroke="#707070" strokeWidth="2.400" /><path d="M0 5.500L6 .5V10.500Z" fill="#707070" /></svg></Tool>
              <Tool><svg width="13" height="15" viewBox="0 0 13 15"><path d="M10 5.500H6Q2 5.500 2 9.500Q2 13 7 13.800" fill="none" stroke="#707070" strokeWidth="2.400" /><path d="M13 5.500L7 .5V10.500Z" fill="#707070" /></svg></Tool>
            </ToolGroup>
            <Divider />
            <ToolGroup $ml={7}>
              <Tool><svg width="17" height="17" viewBox="0 0 17 17"><circle cx="6.500" cy="7.500" r="4.500" fill="none" stroke="#777" strokeWidth="2" /><path d="M9.500 10.500L13 15" stroke="#777" strokeWidth="3" /><path d="M12 2.500H17" stroke="#777" strokeWidth="1.300" /></svg></Tool>
              <Tool><svg width="17" height="17" viewBox="0 0 17 17"><circle cx="6.500" cy="7.500" r="4.500" fill="none" stroke="#777" strokeWidth="2" /><path d="M9.500 10.500L13 15" stroke="#777" strokeWidth="3" /><path d="M11.500 2.800H17M14.200 .3V5.300" stroke="#777" strokeWidth="1.300" /></svg></Tool>
              <Tool>1:1</Tool>
            </ToolGroup>
            <BookTab>
              <svg width="26" height="26" viewBox="0 0 26 26">
                <path d="M13 2.500C10 .5 5 .5 1 2V16C5 14.500 10 14.500 13 16.500C16 14.500 21 14.500 25 16V2C21 .5 16 .5 13 2.500ZM13 2.500V16" fill="#fff" stroke="#666" strokeWidth="1.500" />
                <path d="M9 20H17L13 24Z" fill="#666" />
              </svg>
            </BookTab>
          </Tools>
        </Ribbon>

        <Canvas>
          <Plane>
            {notes.map(([x, y, w, h, t], i) => (
              <Note key={i} $x={x} $y={y} $w={w} $h={h}>{t}</Note>
            ))}
            <StartBlock />
            {program.map((b) => <Block key={b.x} {...b} />)}
          </Plane>
          <ScrollHint width="12" height="15"><path d="M0 0L12 7.500L0 15Z" fill="#b0b0b0" /></ScrollHint>
        </Canvas>

        <Lower>
          <Palette>
            <Categories>
              <ActiveCategory><Chip $fill="#3f8032, #6faa25 40%, #a8e020" $edge="#fafafa" /></ActiveCategory>
              <CategoryStrip>
                <Chip $lift={-5} $fill="#ffe01a, #ff9a22" $edge="#f5a623" />
                <Chip $lift={-5} $fill="#ffff00, #ffe600" $edge="#e8cf10" />
                <Chip $lift={-5} $fill="#ff4a00, #8f1000" $edge="#b01a00" />
                <Chip $lift={-5} $fill="#00b4ff, #0018a0" $edge="#0a3a90" />
                <Chip $lift={-5} $fill="#00d0d0, #008c8c" $edge="#0a8f8f" />
              </CategoryStrip>
            </Categories>
            <Shelf>{shelf.map((a, i) => <ShelfItem key={i} art={a} />)}</Shelf>
          </Palette>
          <Splitter>
            <SplitterHandle width="13" height="22" viewBox="0 0 13 22">
              <path d="M7 .5H4Q1 .5 1 3.500V18.500Q1 21.500 4 21.500H7" fill="#fafafa" stroke="#6c767b" strokeWidth="2" />
              <rect x="4" y="4" width="9" height="14" fill="#f2f2f2" />
              <path d="M5 6.500L11.500 11L5 15.500Z" fill="#555" />
            </SplitterHandle>
          </Splitter>
          <Hardware>
            <SideTabs>
              <SideTab>
                <svg width="20" height="19" viewBox="0 0 20 19"><path d="M1 1H13V4H10V18H1Z" fill="#fff" /><path d="M3 3H7V13H3Z" fill="#808080" /><circle cx="12.500" cy="8.500" r="6.500" fill="#fff" stroke="#808080" strokeWidth="1.300" /><path d="M11 7.500H13V12M10.800 12H15" fill="none" stroke="#666" strokeWidth="1.600" /><circle cx="12.600" cy="5" r="1.100" fill="#666" /><path d="M4 18V16H9L11 18Z" fill="#808080" /><path d="M13 17H17V19H13Z" fill="#fff" /></svg>
              </SideTab>
              <SideTab>
                <svg width="20" height="19" viewBox="0 0 20 19"><rect width="20" height="19" rx="1" fill="#fff" /><path d="M2.500 4H4.500V7H6.500V4H8.200V7H9.200V4H11V7H12V4H13.700V7H15.500V4H17.500V13H15V16H5V13H2.500Z" fill="#707070" /></svg>
              </SideTab>
              <SideTab $on>
                <svg width="20" height="19" viewBox="0 0 20 19"><rect width="20" height="19" rx="1" fill="#0a8cf5" />{[2.5, 8, 13.500].map((y) => (<g key={y} fill="#fff"><rect x="2" y={y} width="10.500" height="3.500" rx=".6" /><circle cx="16.300" cy={y + 1.700} r="1.600" /></g>))}</svg>
              </SideTab>
            </SideTabs>
            <Devices>
              <DeviceCol>
                <ColHead>
                  <svg width="20" height="19" viewBox="0 0 20 19"><rect width="20" height="19" rx="1.500" fill="#4d5f6b" /><path d="M5 8.500A5.200 5.200 0 0 1 14 6M15 10.500A5.200 5.200 0 0 1 6 13" fill="none" stroke="#fff" strokeWidth="2" /><path d="M15.500 3.500V8.500H10.800ZM4.500 15.500V10.500H9.200Z" fill="#fff" /></svg>
                  <svg width="18" height="18" viewBox="0 0 18 18"><rect width="18" height="18" rx="1.500" fill="#bdbdbd" /><path d="M2 9H4M14 9H16M4.500 7.500L7 6V12L4.500 10.500ZM13.500 7.500L11 6V12L13.500 10.500ZM7 7.500H9.500M7 10.500H9.500" fill="#f4f4f4" stroke="#f4f4f4" strokeWidth="1.300" /></svg>
                </ColHead>
              </DeviceCol>
              <DeviceCol $w={34}><ColHead $shade>USB</ColHead></DeviceCol>
              <DeviceCol $w={34}><ColHead $shade>
                <svg width="11" height="17" viewBox="0 0 11 17"><path d="M1 4.500L9.500 12L5.300 15.500V1.500L9.500 5L1 12.500" fill="none" stroke="#444" strokeWidth="1.700" /></svg>
              </ColHead></DeviceCol>
              <DeviceCol $w={34}><ColHead $shade>
                <svg width="18" height="15" viewBox="0 0 18 15" fill="none" stroke="#444" strokeWidth="1.400"><path d="M1 5Q9 -2.500 17 5M3.500 7.500Q9 2 14.500 7.500M6 9.800Q9 7 12 9.800" /><circle cx="9" cy="12.500" r="1.800" fill="#444" stroke="none" /></svg>
              </ColHead></DeviceCol>
              <DeviceCol $w={13}><ColHead /></DeviceCol>
            </Devices>
          </Hardware>
          <Runner>
            <Brand>EV3</Brand>
            <svg width="23" height="23" viewBox="0 0 23 23"><rect x=".5" y=".5" width="22" height="22" rx="2" fill="#ececec" stroke="#dcdcdc" /><path d="M9 3.500H14V6H9ZM9 7.500H14V11H9ZM5 12H18L11.500 19Z" fill="#a0a0a0" /></svg>
            <svg width="24" height="24" viewBox="0 0 24 24"><circle cx="12" cy="12" r="11.300" fill="#f0f0f0" stroke="#dcdcdc" /><path d="M8.500 7L17 12L8.500 17Z" fill="#909090" /></svg>
            <svg width="23" height="23" viewBox="0 0 23 23"><rect x=".5" y=".5" width="22" height="22" rx="2" fill="#ececec" stroke="#dcdcdc" /><path d="M8.500 7L15.500 11.500L8.500 16Z" fill="#a0a0a0" /><path d="M6.500 6Q2.500 11.500 6.500 17M16.500 6Q20.500 11.500 16.500 17" fill="none" stroke="#a0a0a0" strokeWidth="1.400" /></svg>
          </Runner>
        </Lower>
      </Client>
      <Foot />

      <Taskbar>
        <TaskSlot $w={54}>
          <svg width="38" height="38" viewBox="0 0 38 38">
            <circle cx="19" cy="19" r="17.800" fill="url(#orb)" stroke="#8fb0c6" strokeWidth="1.200" />
            <path d="M5 14A15 15 0 0 1 33 14Q19 20 5 14Z" fill="#fff" opacity=".22" />
            <path d="M11 12Q14.500 9.500 18.500 11.500L17 18Q13 16.500 9.500 18.500Z" fill="#f0642a" />
            <path d="M20 12Q24 13.500 28 11L26 18Q22.500 20 18.500 18.500Z" fill="#8cc63f" />
            <path d="M9 20Q13 18 16.700 19.800L15 26.500Q11.500 24.500 7.500 27Z" fill="#3fa9f5" />
            <path d="M18 20.500Q22 21.800 25.700 19.800L24 26.500Q20.500 29 16.500 27Z" fill="#ffcf33" />
          </svg>
        </TaskSlot>
        <TaskSlot $w={70}>
          <svg width="32" height="34" viewBox="0 0 32 34">
            <path d="M24.500 21.500C23 26.500 19.500 27.500 16 27.500C10.500 27.500 7 23 7 17.500C7 11.500 11 7.500 16 7.500C22.500 7.500 25.500 12.500 25.500 18H8" fill="none" stroke="url(#ie)" strokeWidth="5.600" />
            <path d="M28 9C30 2 26 1 19 4.500C10 10 1 21 2 28C2.500 31.500 6.500 31 10 29" fill="none" stroke="#f5c428" strokeWidth="2.100" />
          </svg>
        </TaskSlot>
        <TaskSlot $w={52}>
          <svg width="27" height="27" viewBox="0 0 27 27">
            <rect x="8" y="4" width="18" height="19" fill="#5aa7d4" stroke="#a9d8f0" /><rect x="5" y="2.500" width="18" height="22" fill="#6fb6de" stroke="#a9d8f0" /><rect x="1" y="1" width="18" height="25" fill="#8fc8e8" stroke="#c0e4f5" />
            <circle cx="10" cy="13.500" r="8" fill="#f57f1c" stroke="#fff" /><path d="M7.500 8.500L15 13.500L7.500 18.500Z" fill="#fff" />
          </svg>
        </TaskSlot>
        <TaskButton $ml={7}>
          <svg width="33" height="32" viewBox="0 0 33 32">
            <path d="M2 4L4 1H12V4H31V28H2Z" fill="#e8c766" stroke="#b99236" /><path d="M5 3H11V6H5Z" fill="#3a9a4a" /><path d="M13 3.500H20V7H13Z" fill="#d0402c" /><path d="M21 5H27V8H21Z" fill="#3a7fd0" />
            <path d="M1.500 7H31.500V28H1.500Z" fill="url(#folder)" stroke="#c9a34a" />
            <path d="M5 30V22Q5 17 10 17H24Q29 17 29 22V30H24.500V22.500H9.500V30Z" fill="#9fd8f2" stroke="#e2f5fc" />
          </svg>
        </TaskButton>
        <TaskButton $ml={3}>
          <svg width="30" height="30" viewBox="-15 -15 30 30">
            <path d="M0 0L-12.560 -7.250A14.500 14.500 0 0 1 12.560 -7.250Z" fill="#ea4335" />
            <path d="M0 -7.250H12.560A14.500 14.500 0 0 1 0 14.500L6 3Z" fill="#fbc116" />
            <path d="M-12.560 -7.250L-5.600 3.300L0 6.500L5.500 4L0 14.500A14.500 14.500 0 0 1 -12.560 -7.250Z" fill="#34a853" />
            <circle r="6.800" fill="#fff" /><circle r="5.300" fill="#4285f4" />
          </svg>
        </TaskButton>
        <TaskButton $ml={3}>
          <svg width="32" height="31" viewBox="0 0 32 31">
            <path d="M22 4H30V29H14Z" fill="#f3ece4" stroke="#e0744c" /><rect x="1" y="1" width="22" height="28" fill="#d9532c" stroke="#f0a080" />
            <path d="M7.500 23V7H12Q16.500 7 16.500 11.500T12 16H8" fill="none" stroke="#fff" strokeWidth="4" />
            <path d="M17 17L30 19L28.500 30L15 28Z" fill="#fff" stroke="#c8502c" /><circle cx="20.500" cy="23" r="3" fill="#e0744c" /><path d="M24.500 22H28M24.500 25H27.500" stroke="#c8502c" />
          </svg>
        </TaskButton>
        <TaskButton $ml={4} $bright>
          <svg width="32" height="32" viewBox="0 0 32 32">
            <rect x=".5" y=".5" width="31" height="31" rx="3" fill="#fafafa" stroke="#777" />
            <g transform="translate(16 16) scale(1.200 1.250)">
              <path d="M-5 -8.500H5L8.500 -5V-3H10V3H8.500V5L5 8.500H-5L-8.500 5V3H-10V-3H-8.500V-5Z" fill="#111" />
              <rect x="-5.200" y="-4" width="10.400" height="8" rx="1.500" fill="#fafafa" />
              <rect x="-2.600" y="-2.600" width="5.200" height="5.200" fill="#f01414" />
            </g>
          </svg>
        </TaskButton>
        <Tray>
          <svg width="8" height="5"><path d="M0 5L4 0L8 5Z" fill="#fff" /></svg>
          <TrayIcon $ml={13}>
            <svg width="15" height="16" viewBox="0 0 15 16"><path d="M7 2.500H2V14.500H9" fill="none" stroke="#fff" strokeWidth="1.500" /><rect x="3" y=".5" width="3" height="2" fill="#fff" /><rect x="4" y="5" width="2.500" height="8" fill="#fff" /><path d="M8 5.500H14V8.500Q14 11 11 11T8 8.500ZM9.200 2V5M12.800 2V5M11 11V16" fill="#fff" stroke="#fff" strokeWidth="1.200" /></svg>
          </TrayIcon>
          <TrayIcon $ml={9}>
            <svg width="17" height="16" viewBox="0 0 17 16"><path d="M1.500 1V15" stroke="#fff" strokeWidth="1.500" /><path d="M3 2Q6 .5 8.500 2.500T14 3V9Q11 10 8.500 8.500T3 9Z" fill="#fff" /><circle cx="11.500" cy="10.800" r="4.800" fill="#e02020" /><path d="M9.500 8.800L13.500 12.800M13.500 8.800L9.500 12.800" stroke="#fff" strokeWidth="1.700" /></svg>
          </TrayIcon>
          <TrayIcon $ml={8}>
            <svg width="15" height="12" viewBox="0 0 15 12"><path d="M1.300 9V12M4.300 7.500V12M7.300 5.500V12M10.300 3V12M13.300 0V12" stroke="#fff" strokeWidth="2" /></svg>
          </TrayIcon>
          <TrayIcon $ml={9}>
            <svg width="16" height="15" viewBox="0 0 16 15"><path d="M0 4.500H3L7.500 .5V13.500L3 9.500H0Z" fill="#fff" /><circle cx="10.500" cy="9.800" r="4.700" fill="#e02020" /><circle cx="10.500" cy="9.800" r="2.700" fill="none" stroke="#fff" strokeWidth="1.200" /><path d="M8.600 8L12.400 11.700" stroke="#fff" strokeWidth="1.200" /></svg>
          </TrayIcon>
          <Time>11:55<br />11/09/2017</Time>
          <ShowDesktop />
        </Tray>
      </Taskbar>
    </Screen>
  );
}
